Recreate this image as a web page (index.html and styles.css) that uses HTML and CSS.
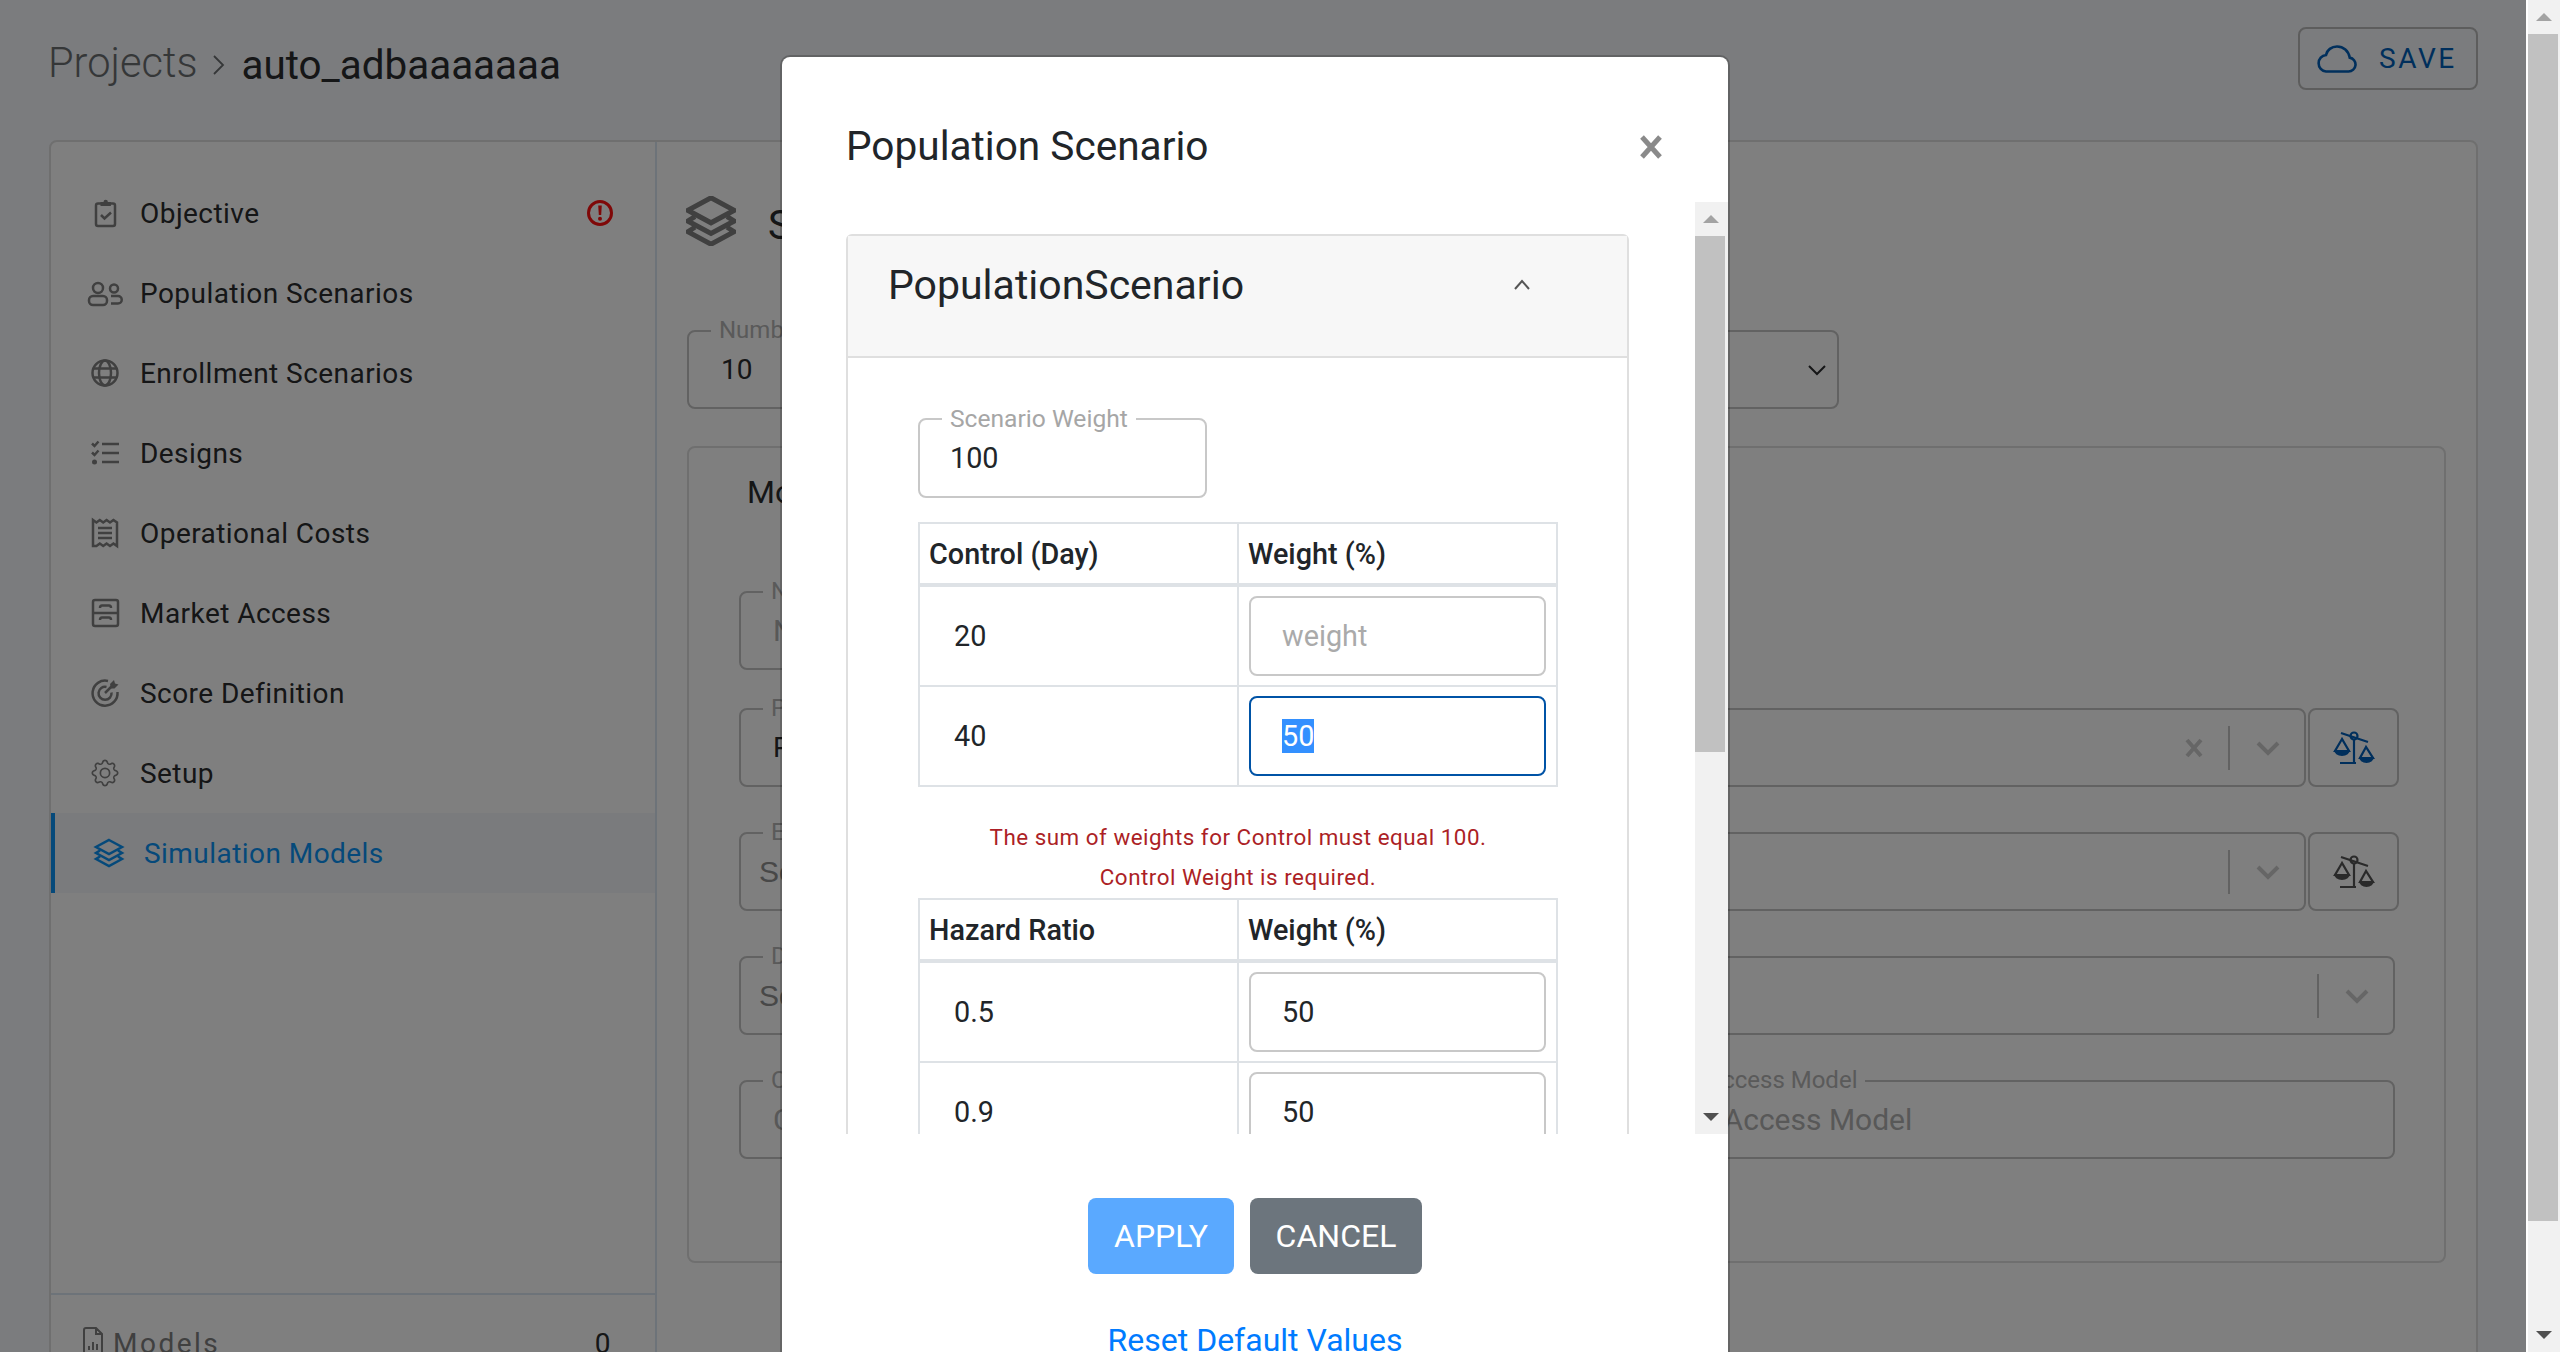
FILE: index.html
```html
<!DOCTYPE html>
<html lang="en">
<head>
    <meta charset="UTF-8">
    <meta name="viewport" content="width=device-width, initial-scale=1.0">
    <title>Population Scenario</title>
    <link rel="stylesheet" href="styles.css">
</head>
<body>
    <div class="page">
        <header class="top-bar">
            <div class="breadcrumb">
                <span class="crumb-root">Projects</span>
                <svg class="crumb-sep" viewBox="0 0 14 22" width="14" height="22"><path d="M2 2l9 9-9 9" fill="none" stroke="currentColor" stroke-width="1.8"/></svg>
                <span class="crumb-current">auto_adbaaaaaaa</span>
            </div>
            <button class="save-btn" type="button">
                <svg viewBox="0 0 40 28" width="40" height="28"><path d="M9 26.5h22.5a7 7 0 0 0 1.2-13.9C31.5 6 26.5 1.5 20 1.5c-5.5 0-10 3.5-11 8.5a8.3 8.3 0 0 0 0 16.5z" fill="none" stroke="currentColor" stroke-width="2.6"/></svg>
                SAVE
            </button>
        </header>

        <main class="workspace">
            <aside class="sidebar">
                <nav class="side-nav">
                    <a class="side-item">
                        <svg class="side-icon" viewBox="0 0 34 34"><rect x="7" y="7.500" width="19" height="22.500" rx="2"/><path class="solid" d="M11.500 10V6h3a2.200 2.200 0 0 1 4.400 0h3v4z"/><path d="M12 19l3.500 3.500 6.500-6"/></svg>
                        <span>Objective</span>
                        <svg class="alert-icon" viewBox="0 0 28 28" width="28" height="28"><circle cx="14" cy="14" r="11.500" fill="none" stroke="currentColor" stroke-width="3"/><path d="M12.200 6.500h3.600l-.6 9.500h-2.400z" fill="currentColor"/><circle cx="14" cy="19.700" r="2" fill="currentColor"/></svg>
                    </a>
                    <a class="side-item">
                        <svg class="side-icon" viewBox="0 0 34 34"><circle cx="9" cy="12" r="5"/><circle cx="25" cy="12.500" r="4"/><rect x="0" y="20" width="18" height="9" rx="4"/><path d="M22 20h7a3.500 3.500 0 0 1 0 7.500h-7"/></svg>
                        <span>Population Scenarios</span>
                    </a>
                    <a class="side-item">
                        <svg class="side-icon" viewBox="0 0 34 34"><circle cx="16" cy="17" r="12.500"/><ellipse cx="16" cy="17" rx="6" ry="12.500"/><path d="M4.500 12.500h23M4.500 21.500h23"/></svg>
                        <span>Enrollment Scenarios</span>
                    </a>
                    <a class="side-item">
                        <svg class="side-icon" viewBox="0 0 34 34"><path d="M13 8h17M13 17h17M13 26h17M3 7.500l2.500 2.500 4-4.500M3 16.500l2.500 2.500 4-4.500"/><circle class="solid" cx="5.500" cy="26" r="2.500"/></svg>
                        <span>Designs</span>
                    </a>
                    <a class="side-item">
                        <svg class="side-icon" viewBox="0 0 34 34"><path d="M4 4l3.400 2.500 3.400-2.500 3.400 2.500 3.400-2.500 3.400 2.500 3.400-2.500 3.600 2.500V30l-3.600-2.500-3.400 2.500-3.400-2.500-3.400 2.500-3.400-2.500-3.400 2.500L4 30zM9 12h14M9 17h14M9 22h14"/></svg>
                        <span>Operational Costs</span>
                    </a>
                    <a class="side-item">
                        <svg class="side-icon" viewBox="0 0 34 34"><rect x="4" y="4" width="25" height="26" rx="2"/><path d="M4 17h25M11 12c0-2 1-2.500 2-2.500h7c1 0 2 .5 2 2.500M11 24c0-2 1-2.500 2-2.500h7c1 0 2 .5 2 2.500"/></svg>
                        <span>Market Access</span>
                    </a>
                    <a class="side-item">
                        <svg class="side-icon" viewBox="0 0 34 34"><path d="M19 5a12.500 12.500 0 1 0 9.500 11"/><path d="M17.500 11a6.500 6.500 0 1 0 5 5.500"/><path d="M16 17l7-7"/><path class="solid" d="M21 8l4-4 1 3.500 3.500 1-4 4h-3.500z"/></svg>
                        <span>Score Definition</span>
                    </a>
                    <a class="side-item">
                        <svg class="side-icon gear" viewBox="-1.480 -2.070 20.150 20.150"><path class="solid" d="M8 4.754a3.246 3.246 0 1 0 0 6.492 3.246 3.246 0 0 0 0-6.492zM5.754 8a2.246 2.246 0 1 1 4.492 0 2.246 2.246 0 0 1-4.492 0z"/><path class="solid" d="M9.796 1.343c-.527-1.79-3.065-1.79-3.592 0l-.094.319a.873.873 0 0 1-1.255.52l-.292-.16c-1.64-.892-3.433.902-2.54 2.541l.159.292a.873.873 0 0 1-.52 1.255l-.319.094c-1.79.527-1.79 3.065 0 3.592l.319.094a.873.873 0 0 1 .52 1.255l-.16.292c-.892 1.64.901 3.434 2.541 2.54l.292-.159a.873.873 0 0 1 1.255.52l.094.319c.527 1.79 3.065 1.79 3.592 0l.094-.319a.873.873 0 0 1 1.255-.52l.292.16c1.64.893 3.434-.902 2.54-2.541l-.159-.292a.873.873 0 0 1 .52-1.255l.319-.094c1.79-.527 1.79-3.065 0-3.592l-.319-.094a.873.873 0 0 1-.52-1.255l.16-.292c.893-1.64-.902-3.433-2.541-2.54l-.292.159a.873.873 0 0 1-1.255-.52l-.094-.319zm-2.633.283c.246-.835 1.428-.835 1.674 0l.094.319a1.873 1.873 0 0 0 2.693 1.115l.291-.16c.764-.415 1.6.42 1.184 1.185l-.159.292a1.873 1.873 0 0 0 1.116 2.692l.318.094c.835.246.835 1.428 0 1.674l-.319.094a1.873 1.873 0 0 0-1.115 2.693l.16.291c.415.764-.42 1.6-1.185 1.184l-.291-.159a1.873 1.873 0 0 0-2.693 1.116l-.094.318c-.246.835-1.428.835-1.674 0l-.094-.319a1.873 1.873 0 0 0-2.692-1.115l-.292.16c-.764.415-1.6-.42-1.184-1.185l.159-.291A1.873 1.873 0 0 0 1.945 8.93l-.319-.094c-.835-.246-.835-1.428 0-1.674l.319-.094A1.873 1.873 0 0 0 3.06 4.377l-.16-.292c-.415-.764.42-1.6 1.185-1.184l.292.159a1.873 1.873 0 0 0 2.692-1.115l.094-.319z"/></svg>
                        <span>Setup</span>
                    </a>
                    <a class="side-item active">
                        <svg class="side-icon" viewBox="0 0 34 34"><path d="M16 4l13 7-13 7-13-7zM7 14.500L3 17l13 7 13-7-4-2.500M7 20.500L3 23l13 7 13-7-4-2.500"/></svg>
                        <span>Simulation Models</span>
                    </a>
                </nav>
                <div class="side-footer">
                    <svg viewBox="0 0 22 28" width="22" height="28"><path d="M2 3a2 2 0 0 1 2-2h10l6 6v18a2 2 0 0 1-2 2H4a2 2 0 0 1-2-2zM14 1v6h6M7 23v-4M11 23v-8M15 23v-6" fill="none" stroke="currentColor" stroke-width="2"/></svg>
                    <span class="footer-label">Models</span>
                    <span class="footer-count">0</span>
                </div>
            </aside>

            <section class="panel">
                <div class="panel-head">
                    <svg class="panel-icon" viewBox="2 3 28 28" width="50" height="50"><path d="M16 4l13 7-13 7-13-7zM7 14.500L3 17l13 7 13-7-4-2.500M7 20.500L3 23l13 7 13-7-4-2.500" fill="none" stroke="currentColor" stroke-width="2.800"/></svg>
                    <h2>Simulation Models</h2>
                </div>

                <div class="panel-row">
                    <div class="bg-field">
                        <label>Number of Simulations</label>
                        <span class="bg-value">10</span>
                    </div>
                    <div class="bg-field">
                        <span class="bg-value">Fixed</span>
                        <svg class="plain-chevron" viewBox="0 0 20 12" width="20" height="12"><path d="M2 2l8 8 8-8" fill="none" stroke="currentColor" stroke-width="2"/></svg>
                    </div>
                </div>

                <div class="model-card">
                    <h3>Model</h3>
                    <div class="model-fields">
                        <div class="bg-field name-field">
                            <label>Name</label>
                            <span class="bg-placeholder">Name</span>
                        </div>
                        <div class="model-row">
                            <div class="bg-field grow">
                                <label>Population Scenario</label>
                                <span class="bg-value">PopulationScenario</span>
                                <svg class="clear-x" viewBox="0 0 20 20" width="20" height="20"><path d="M3 2l14 16M17 2L3 18" fill="none" stroke="currentColor" stroke-width="4"/></svg>
                                <span class="select-sep"></span>
                                <svg class="select-chevron" viewBox="0 0 24 16" width="24" height="16"><path d="M2 3l10 10L22 3" fill="none" stroke="currentColor" stroke-width="4"/></svg>
                            </div>
                            <button class="scale-btn active-scale" type="button">
                                <svg viewBox="20 18 46 38" width="46" height="38"><path d="M30 22l27 9M43 29v23M29 52h16M31 28l-7 12h14zM55 36l-6 11h13z" fill="none" stroke="currentColor" stroke-width="2.200"/><circle cx="43" cy="25" r="3.500" fill="none" stroke="currentColor" stroke-width="2.200"/><path d="M23 39h16a8 6 0 0 1-16 0zM48 46h15a7.500 6 0 0 1-15 0z" fill="currentColor"/></svg>
                            </button>
                        </div>
                        <div class="model-row">
                            <div class="bg-field grow">
                                <label>Enrollment Scenario</label>
                                <span class="bg-select-text">Select...</span>
                                <span class="select-sep"></span>
                                <svg class="select-chevron" viewBox="0 0 24 16" width="24" height="16"><path d="M2 3l10 10L22 3" fill="none" stroke="currentColor" stroke-width="4"/></svg>
                            </div>
                            <button class="scale-btn" type="button">
                                <svg viewBox="20 18 46 38" width="46" height="38"><path d="M30 22l27 9M43 29v23M29 52h16M31 28l-7 12h14zM55 36l-6 11h13z" fill="none" stroke="currentColor" stroke-width="2.200"/><circle cx="43" cy="25" r="3.500" fill="none" stroke="currentColor" stroke-width="2.200"/><path d="M23 39h16a8 6 0 0 1-16 0zM48 46h15a7.500 6 0 0 1-15 0z" fill="currentColor"/></svg>
                            </button>
                        </div>
                        <div class="bg-field">
                            <label>Design</label>
                            <span class="bg-select-text">Select...</span>
                            <span class="select-sep"></span>
                            <svg class="select-chevron" viewBox="0 0 24 16" width="24" height="16"><path d="M2 3l10 10L22 3" fill="none" stroke="currentColor" stroke-width="4"/></svg>
                        </div>
                        <div class="bg-field">
                            <label>Costs <span class="far-label">Market Access Model</span></label>
                            <span class="bg-placeholder">Costs <span class="far-text">Market Access Model</span></span>
                        </div>
                    </div>
                </div>
            </section>
        </main>

        <div class="overlay"></div>

        <div class="modal">
            <div class="modal-head">
                <h4>Population Scenario</h4>
                <svg class="modal-close" viewBox="0 0 24 24" width="24" height="24"><path d="M3 2l18 20M21 2L3 22" fill="none" stroke="currentColor" stroke-width="5"/></svg>
            </div>

            <div class="modal-body">
                <div class="modal-scroll">
                    <div class="accordion">
                        <div class="accordion-head">
                            <span>PopulationScenario</span>
                            <svg viewBox="0 0 18 12" width="18" height="12"><path d="M2 10l7-8 7 8" fill="none" stroke="currentColor" stroke-width="2"/></svg>
                        </div>
                        <div class="accordion-body">
                            <div class="weight-field">
                                <label>Scenario Weight</label>
                                <span>100</span>
                            </div>

                            <table class="weights">
                                <thead>
                                    <tr><th>Control (Day)</th><th>Weight (%)</th></tr>
                                </thead>
                                <tbody>
                                    <tr>
                                        <td>20</td>
                                        <td><div class="cell-input placeholder">weight</div></td>
                                    </tr>
                                    <tr>
                                        <td>40</td>
                                        <td><div class="cell-input focused"><span class="selected">50</span></div></td>
                                    </tr>
                                </tbody>
                            </table>

                            <div class="errors">
                                <p>The sum of weights for Control must equal 100.</p>
                                <p>Control Weight is required.</p>
                            </div>

                            <table class="weights">
                                <thead>
                                    <tr><th>Hazard Ratio</th><th>Weight (%)</th></tr>
                                </thead>
                                <tbody>
                                    <tr>
                                        <td>0.5</td>
                                        <td><div class="cell-input">50</div></td>
                                    </tr>
                                    <tr>
                                        <td>0.9</td>
                                        <td><div class="cell-input">50</div></td>
                                    </tr>
                                </tbody>
                            </table>
                        </div>
                    </div>
                </div>
                <div class="scrollbar modal-bar">
                    <span class="bar-arrow up light"></span>
                    <span class="bar-thumb"></span>
                    <span class="bar-fill"></span>
                    <span class="bar-arrow down"></span>
                </div>
            </div>

            <div class="modal-foot">
                <div class="modal-actions">
                    <button class="btn btn-apply" type="button">APPLY</button>
                    <button class="btn btn-cancel" type="button">CANCEL</button>
                </div>
                <a class="reset-link">Reset Default Values</a>
            </div>
        </div>
    </div>

    <div class="scrollbar page-bar">
        <span class="bar-arrow up light"></span>
        <span class="bar-thumb"></span>
        <span class="bar-fill"></span>
        <span class="bar-arrow down"></span>
    </div>
</body>
</html>
```

FILE: styles.css
```css
* {
    box-sizing: border-box;
}
body {
    margin: 0;
    height: 1352px;
    display: flex;
    overflow: hidden;
    font-family: Roboto, "Liberation Sans", sans-serif;
    color: #2b2c2e;
    background: #f1f1f1;
}
h2, h3, h4, p {
    margin: 0;
    font-weight: 400;
}
button {
    font-family: inherit;
    cursor: pointer;
}

/* page behind the dialog */
.page {
    position: relative;
    flex: 1;
    height: 1352px;
    overflow: hidden;
    padding-right: 48px;
    background: #f6f8fc;
    border-right: 2px solid #fff;
}
.top-bar {
    height: 140px;
    padding: 27px 0 0 48px;
    display: flex;
    justify-content: space-between;
    align-items: flex-start;
}
.breadcrumb {
    display: flex;
    align-items: center;
    height: 70px;
}
.crumb-root {
    font-size: 41.6px;
    font-weight: 300;
    color: #6b6e70;
}
.crumb-sep {
    margin: 6px 15px 0 15px;
    color: #6b6e70;
}
.crumb-current {
    margin-top: 6px;
    font-size: 40.4px;
}
.save-btn {
    width: 180px;
    height: 63px;
    padding: 0 0 0 17px;
    display: flex;
    align-items: center;
    gap: 22px;
    background: none;
    border: 2px solid #bbb;
    border-radius: 8px;
    color: #005eb8;
    font-size: 28px;
    letter-spacing: 2.6px;
}
.workspace {
    margin-left: 49px;
    height: 1300px;
    display: flex;
    background: #fff;
    border: 2px solid #dedede;
    border-radius: 8px 8px 0 0;
}
.sidebar {
    width: 606px;
    flex-shrink: 0;
    border-right: 2px solid #dae6f2;
}
.side-nav {
    height: 1153px;
    padding-top: 31px;
    border-bottom: 2px solid #dae6f2;
}
.side-item {
    height: 80px;
    padding-left: 38px;
    display: flex;
    align-items: center;
    gap: 17px;
    font-size: 28px;
    letter-spacing: 0.45px;
}
.side-item.active {
    background: #f4f6fa;
    border-left: 4px solid #0a93f5;
    color: #0a93f5;
}
.side-icon {
    width: 34px;
    height: 34px;
    flex-shrink: 0;
    overflow: visible;
    fill: none;
    stroke: #808080;
    stroke-width: 2.5;
}
.active .side-icon {
    stroke: #0a93f5;
}
.side-icon .solid {
    fill: #808080;
    stroke: none;
}
.alert-icon {
    margin-left: auto;
    margin-right: 41px;
    color: #ff1010;
}
.side-footer {
    height: 100px;
    padding: 32px 42px 0 31px;
    display: flex;
    align-items: flex-start;
    gap: 9px;
    color: #808080;
    font-size: 28px;
    letter-spacing: 2.5px;
}
.footer-count {
    margin-left: auto;
    color: #2b2c2e;
}
.panel {
    flex: 1;
    padding: 54px 30px 0 30px;
}
.panel-head {
    height: 50px;
    display: flex;
    align-items: center;
    gap: 32px;
}
.panel-icon {
    margin-left: -1px;
    color: #808080;
}
.panel-head h2 {
    padding-top: 8px;
    font-size: 40px;
}
.panel-row {
    margin-top: 84px;
    width: 1152px;
    display: grid;
    grid-template-columns: 1fr 1fr;
    gap: 16px;
}
.bg-field {
    position: relative;
    height: 79px;
    padding: 0 32px;
    display: flex;
    align-items: center;
    border: 2px solid #c4c4c4;
    border-radius: 8px;
    font-size: 28px;
}
.bg-field label {
    position: absolute;
    left: 22px;
    top: -16px;
    padding: 0 8px;
    background: #fff;
    color: #b4b4b4;
    font-size: 24px;
    white-space: nowrap;
}
.far-label {
    margin-left: 787px;
}
.bg-placeholder {
    color: #b0b0b0;
    font-size: 30px;
    white-space: nowrap;
}
.far-text {
    margin-left: 765px;
}
.bg-select-text {
    margin-left: -14px;
    color: #909090;
    font-family: "Liberation Sans", sans-serif;
    font-size: 30px;
}
.plain-chevron {
    margin-left: auto;
    margin-right: -22px;
}
.select-sep {
    width: 2px;
    height: 44px;
    margin-left: auto;
    margin-right: 26px;
    background: #c4c4c4;
}
.select-chevron {
    margin-right: -8px;
    color: #ccc;
}
.clear-x {
    position: absolute;
    right: 100px;
    color: #ccc;
}
.model-card {
    margin-top: 37px;
    height: 817px;
    padding: 24px 49px 0 50px;
    background: #fff;
    border: 2px solid #dedede;
    border-radius: 8px;
}
.model-card h3 {
    margin-left: 8px;
    font-size: 32px;
    line-height: 40px;
}
.model-fields {
    margin-top: 79px;
    display: flex;
    flex-direction: column;
    gap: 45px;
}
.name-field {
    width: 760px;
    margin-bottom: -7px;
}
.model-row {
    display: flex;
    gap: 2px;
    margin-right: -4px;
}
.grow {
    flex: 1;
}
.scale-btn {
    width: 91px;
    height: 79px;
    padding: 0;
    display: flex;
    align-items: center;
    justify-content: center;
    background: none;
    border: 2px solid #c4c4c4;
    border-radius: 8px;
    color: #555;
}
.active-scale {
    color: #005eb8;
}
.overlay {
    position: absolute;
    inset: 0;
    background: rgba(0, 0, 0, 0.5);
}

/* dialog */
.modal {
    position: absolute;
    left: 782px;
    top: 57px;
    width: 946px;
    height: 1400px;
    background: #fff;
    border-radius: 8px;
    box-shadow: 0 0 0 2px rgba(0, 0, 0, 0.2);
}
.modal-head {
    height: 145px;
    padding: 65px 65px 0 64px;
    display: flex;
    justify-content: space-between;
    color: #212529;
}
.modal-head h4 {
    font-size: 40.6px;
    line-height: 48px;
}
.modal-close {
    margin: 13px 0 0;
    color: #8a8a8a;
}
.modal-body {
    height: 932px;
    display: flex;
    overflow: hidden;
}
.modal-scroll {
    flex: 1;
    padding: 32px 66px 0 64px;
}
.accordion {
    border: 2px solid #dfdfdf;
    border-radius: 6px 6px 0 0;
}
.accordion-head {
    height: 122px;
    padding: 25px 96px 0 40px;
    display: flex;
    justify-content: space-between;
    background: #f7f7f7;
    border-bottom: 2px solid #dfdfdf;
    color: #212529;
    font-size: 41px;
    line-height: 48px;
}
.accordion-head svg {
    margin-top: 18px;
    color: #555;
}
.accordion-body {
    padding: 60px 69px 40px 70px;
}
.weight-field {
    position: relative;
    width: 289px;
    height: 80px;
    padding-left: 30px;
    display: flex;
    align-items: center;
    border: 2px solid #c8c8c8;
    border-radius: 8px;
    color: #212529;
    font-size: 28.8px;
}
.weight-field label {
    position: absolute;
    left: 22px;
    top: -16px;
    padding: 0 8px;
    background: #fff;
    color: #a6a6a6;
    font-size: 24.6px;
}
.weights {
    width: 640px;
    margin-top: 24px;
    table-layout: fixed;
    border-collapse: collapse;
    color: #212529;
    font-size: 28.8px;
}
.weights th, .weights td {
    border: 2px solid #dee2e6;
}
.weights th {
    height: 62px;
    padding: 0 10px 0 9px;
    text-align: left;
    font-weight: 500;
    border-bottom-width: 4px;
}
.weights td {
    padding: 9px 10px;
}
.weights td:first-child {
    padding-left: 34px;
}
.cell-input {
    height: 80px;
    padding-left: 31px;
    display: flex;
    align-items: center;
    background: #fff;
    border: 2px solid #c8c8c8;
    border-radius: 8px;
}
.cell-input.placeholder {
    color: #aaa;
}
.cell-input.focused {
    border-color: #0053a6;
}
.selected {
    background: #3390ff;
    color: #fff;
}
.errors {
    margin: 30px 0 1px;
    text-align: center;
    color: #ac1f26;
    font-size: 22.4px;
    line-height: 40px;
    letter-spacing: 0.5px;
}
.errors + .weights {
    margin-top: 0;
}
.modal-foot {
    padding-top: 64px;
    text-align: center;
}
.modal-actions {
    display: flex;
    justify-content: center;
    gap: 16px;
}
.btn {
    height: 76px;
    border: none;
    border-radius: 8px;
    color: #fff;
    font-size: 32px;
}
.btn-apply {
    width: 146px;
    background: #5aa9ff;
}
.btn-cancel {
    width: 172px;
    background: #6c757d;
}
.reset-link {
    display: block;
    margin-top: 46px;
    color: #007bff;
    font-size: 32px;
    line-height: 40px;
}

/* scrollbars */
.scrollbar {
    display: flex;
    flex-direction: column;
    flex-shrink: 0;
    background: #f1f1f1;
}
.page-bar {
    width: 32px;
    height: 1352px;
}
.modal-bar {
    width: 33px;
    height: 932px;
}
.bar-arrow {
    position: relative;
    height: 34px;
    flex-shrink: 0;
    width: 30px;
}
.bar-arrow::after {
    content: "";
    position: absolute;
    left: 8px;
    top: 13px;
    border-left: 8px solid transparent;
    border-right: 8px solid transparent;
}
.bar-arrow.up::after {
    border-bottom: 8px solid #505050;
}
.bar-arrow.up.light::after {
    border-bottom-color: #a3a3a3;
}
.bar-arrow.down::after {
    border-top: 8px solid #505050;
}
.bar-thumb {
    width: 30px;
    background: #c1c1c1;
}
.page-bar .bar-thumb {
    height: 1187px;
}
.modal-bar .bar-thumb {
    height: 516px;
}
.bar-fill {
    flex: 1;
}
```
